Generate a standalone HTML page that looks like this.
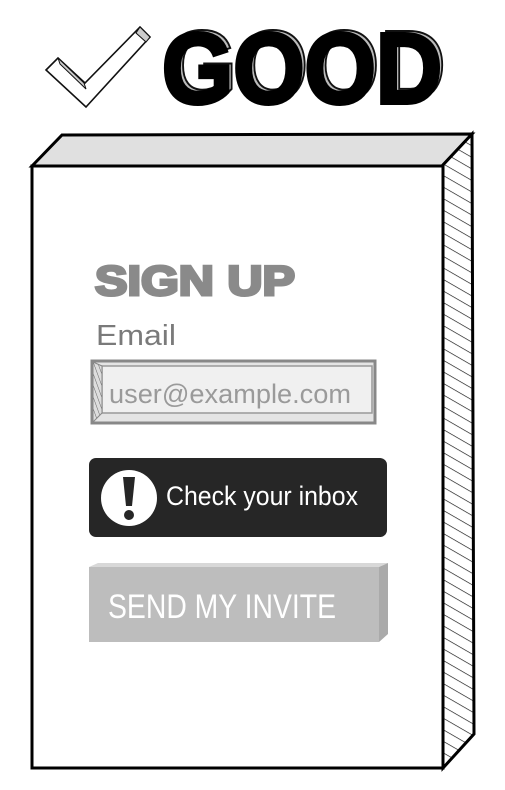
<!DOCTYPE html>
<html><head><meta charset="utf-8"><style>
html,body{margin:0;padding:0;background:#fff;width:505px;height:790px;overflow:hidden}
svg{display:block}
</style></head><body>
<svg width="505" height="790" viewBox="0 0 505 790" xmlns="http://www.w3.org/2000/svg">
<defs>
<pattern id="h" width="10" height="10" patternUnits="userSpaceOnUse" patternTransform="rotate(30)">
<rect width="10" height="10" fill="#fff"/><line x1="0" y1="0" x2="10" y2="0" stroke="#111" stroke-width="1.3"/>
</pattern>
<pattern id="h2" width="4" height="4" patternUnits="userSpaceOnUse" patternTransform="rotate(70)">
<rect width="4" height="4" fill="#ddd"/><line x1="0" y1="0" x2="4" y2="0" stroke="#666" stroke-width="1"/>
</pattern>
</defs>
<path d="M46 70 L58 58 L85 83 L140 27 L150 37 L86 107 Z" fill="#fff" stroke="#111" stroke-width="1.6"/>
<path d="M58 58 L60 64 L86 89 L84 83 Z M140 27 L136 33 L146 42 L150 37 Z" fill="#ccc" stroke="#111" stroke-width="1"/>
<text x="166" y="100" font-family="Liberation Sans, sans-serif" font-weight="bold" font-size="100" fill="#bbb" stroke="#111" stroke-width="2" textLength="280" lengthAdjust="spacingAndGlyphs">GOOD</text>
<text x="162" y="103" font-family="Liberation Sans, sans-serif" font-weight="bold" font-size="100" fill="#000" stroke="#000" stroke-width="4" textLength="280" lengthAdjust="spacingAndGlyphs">GOOD</text>
<polygon points="32,166 62,135 472,134 442,166" fill="#e0e0e0" stroke="#000" stroke-width="3"/>
<polygon points="442,166 472,134 474,734 443,768" fill="url(#h)" stroke="#000" stroke-width="3"/>
<rect x="32" y="166" width="411" height="602" fill="#fff" stroke="#000" stroke-width="3"/>
<text x="95" y="295" font-family="Liberation Sans, sans-serif" font-weight="bold" font-size="42" fill="#8a8a8a" stroke="#8a8a8a" stroke-width="3" textLength="200" lengthAdjust="spacingAndGlyphs">SIGN UP</text>
<text x="96" y="345" font-family="Liberation Sans, sans-serif" font-size="29" fill="#7a7a7a" textLength="80" lengthAdjust="spacingAndGlyphs">Email</text>
<rect x="92" y="361" width="283" height="62" fill="#e4e4e4" stroke="#888" stroke-width="3"/>
<rect x="102" y="366" width="270" height="47" fill="#f0f0f0" stroke="#999" stroke-width="1.5"/>
<polygon points="93,362 102,366 102,413 93,422" fill="url(#h2)" stroke="#888" stroke-width="1"/>
<text x="109" y="403" font-family="Liberation Sans, sans-serif" font-size="27" fill="#9a9a9a" textLength="242" lengthAdjust="spacingAndGlyphs">user@example.com</text>
<rect x="89" y="458" width="298" height="79" rx="7" fill="#262626"/>
<circle cx="129" cy="498" r="28" fill="#fff"/>
<path d="M123 477 L135 477 L132 506 L126 506 Z" fill="#262626"/>
<circle cx="129" cy="515" r="5" fill="#262626"/>
<text x="166" y="505" font-family="Liberation Sans, sans-serif" font-size="27" fill="#fff" textLength="192" lengthAdjust="spacingAndGlyphs">Check your inbox</text>
<polygon points="89,567 98,563 388,563 379,567" fill="#d8d8d8"/>
<polygon points="379,567 388,563 388,634 379,642" fill="#aaa"/>
<rect x="89" y="567" width="290" height="75" fill="#bdbdbd"/>
<text x="108" y="618" font-family="Liberation Sans, sans-serif" font-size="34" fill="#fff" textLength="228" lengthAdjust="spacingAndGlyphs">SEND MY INVITE</text>
</svg>
</body></html>
